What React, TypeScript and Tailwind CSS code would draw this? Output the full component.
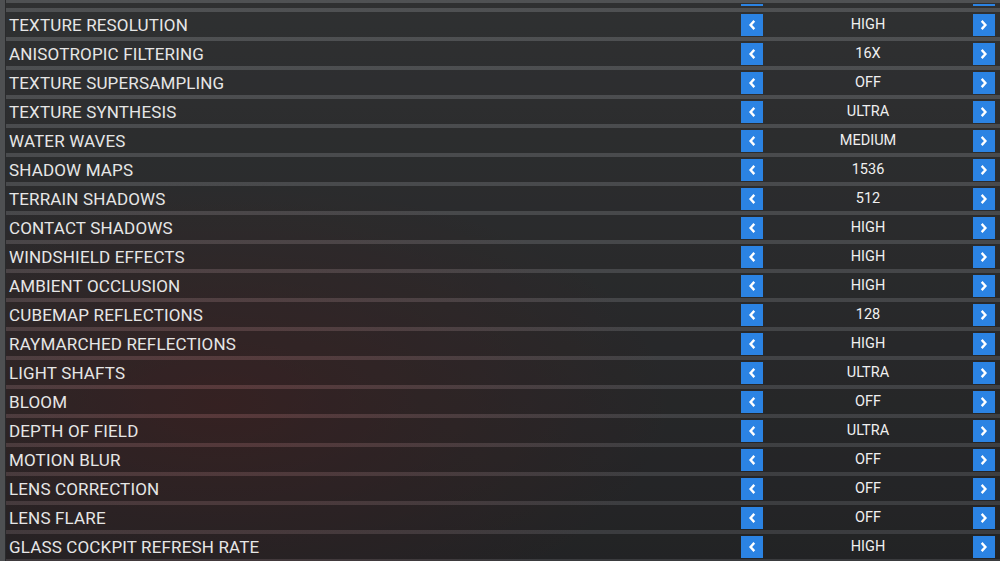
import React from "react";

const rows: [string, string][] = [
  ["TEXTURE RESOLUTION", "HIGH"],
  ["ANISOTROPIC FILTERING", "16X"],
  ["TEXTURE SUPERSAMPLING", "OFF"],
  ["TEXTURE SYNTHESIS", "ULTRA"],
  ["WATER WAVES", "MEDIUM"],
  ["SHADOW MAPS", "1536"],
  ["TERRAIN SHADOWS", "512"],
  ["CONTACT SHADOWS", "HIGH"],
  ["WINDSHIELD EFFECTS", "HIGH"],
  ["AMBIENT OCCLUSION", "HIGH"],
  ["CUBEMAP REFLECTIONS", "128"],
  ["RAYMARCHED REFLECTIONS", "HIGH"],
  ["LIGHT SHAFTS", "ULTRA"],
  ["BLOOM", "OFF"],
  ["DEPTH OF FIELD", "ULTRA"],
  ["MOTION BLUR", "OFF"],
  ["LENS CORRECTION", "OFF"],
  ["LENS FLARE", "OFF"],
  ["GLASS COCKPIT REFRESH RATE", "HIGH"],
];

function Chevron({ dir }: { dir: "left" | "right" }) {
  return (
    <svg width="8" height="10" viewBox="0 0 8 10">
      {dir === "left" ? (
        <polyline points="5.5,1.8 2.6,5 5.5,8.2" fill="none" stroke="#fff" strokeWidth="2.4" strokeLinecap="square" strokeLinejoin="miter" />
      ) : (
        <polyline points="2.5,1.8 5.4,5 2.5,8.2" fill="none" stroke="#fff" strokeWidth="2.4" strokeLinecap="square" strokeLinejoin="miter" />
      )}
    </svg>
  );
}

function ArrowButton({ dir }: { dir: "left" | "right" }) {
  return (
    <div className="w-[22px] h-[22px] bg-[#2b83e3] flex items-center justify-center shrink-0">
      <Chevron dir={dir} />
    </div>
  );
}

function Row({ label, value }: { label: string; value: string }) {
  return (
    <div className="pt-[4px] shrink-0">
      <div className="h-[25px] bg-black/40 flex items-center pr-[5px]">
        <div className="flex-1 pl-[3px] pt-[1px] text-[17px] text-[#e6e6e6] leading-none tracking-[0.15px]">{label}</div>
        <ArrowButton dir="left" />
        <div className="w-[210px] pt-[1px] text-center text-[14.5px] text-[#f0f0f0] leading-none">{value}</div>
        <ArrowButton dir="right" />
      </div>
    </div>
  );
}

export default function App() {
  return (
    <div
      className="w-[1000px] h-[561px] overflow-hidden flex bg-[radial-gradient(ellipse_45%_40%_at_22%_72%,rgba(120,45,45,0.45),transparent),linear-gradient(to_bottom,#4f5153,#3a3b3e)]"
      style={{ fontFamily: "Roboto, 'Noto Sans', sans-serif" }}
    >
      <div className="w-[5px] shrink-0 bg-[#4e5052]" />
      <div className="w-[1px] shrink-0 bg-[#2a2b2d]" />
      <div className="flex-1 flex flex-col">
        <div className="h-[3px] shrink-0" />
        <div className="h-[5px] shrink-0 bg-black/40 flex items-start pt-[1px] pr-[5px]">
          <div className="flex-1" />
          <div className="w-[22px] h-[2px] bg-[#2b83e3]" />
          <div className="w-[210px]" />
          <div className="w-[22px] h-[2px] bg-[#2b83e3]" />
        </div>
        {rows.map(([l, v]) => (
          <Row key={l} label={l} value={v} />
        ))}
        <div className="pt-[4px] shrink-0">
          <div className="h-[25px] bg-black/40" />
        </div>
      </div>
    </div>
  );
}
